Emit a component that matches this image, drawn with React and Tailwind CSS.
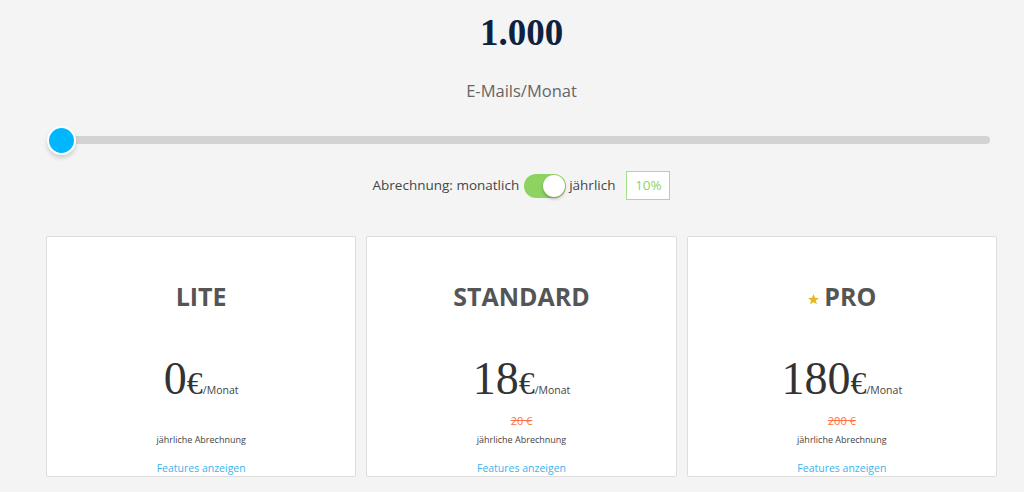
import React, { useState } from 'react';

const plans = [
  { name: 'LITE', price: '0', old: null, star: false },
  { name: 'STANDARD', price: '18', old: '20 €', star: false },
  { name: 'PRO', price: '180', old: '200 €', star: true },
];

function Star() {
  return (
    <svg width="13" height="13" viewBox="0 0 24 24" className="mr-[4px] mt-[4px]">
      <path d="M12 2l2.9 6.6 7.1.6-5.4 4.7 1.6 7-6.2-3.7-6.2 3.7 1.6-7L2 9.2l7.1-.6z" fill="#e8b923" />
    </svg>
  );
}

export default function App() {
  const [yearly, setYearly] = useState(true);

  return (
    <div className="min-h-screen bg-[#f4f4f4] font-['Open_Sans',sans-serif] overflow-hidden">
      <div className="ml-[46px] mr-[27px]">
        {/* Volume */}
        <div className="flex flex-col items-center pt-[11px]">
          <p className="font-['Liberation_Serif',serif] font-bold text-[37px] leading-[44px] text-[#0d2240]">1.000</p>
          <p className="mt-[25px] text-[16.5px] leading-[22px] text-[#666]">E-Mails/Monat</p>
        </div>

        {/* Slider */}
        <div className="ml-[1px] mr-[7px] mt-[23px] relative h-[30px] flex items-center">
          <div className="h-[8px] w-full rounded-full bg-[#d3d3d3]" />
          <div className="absolute left-0 top-[1px] w-[29px] h-[29px] rounded-full bg-[#00b6ff] border-2 border-white shadow-[0_3px_4px_rgba(0,0,0,0.15)]" />
        </div>

        {/* Billing */}
        <div className="mt-[16px] flex items-center justify-center text-[13.5px] text-[#444]">
          <span>Abrechnung: monatlich</span>
          <button
            onClick={() => setYearly(!yearly)}
            className="ml-[5px] mr-[3px] w-[42px] h-[24px] rounded-full bg-[#8ed35f] relative"
          >
            <span className="absolute right-[1px] top-[1px] w-[22px] h-[22px] rounded-full bg-white shadow-[0_2px_3px_rgba(0,0,0,0.25)]" />
          </button>
          <span>jährlich</span>
          <span className="ml-[11px] w-[44px] h-[29px] flex items-center justify-center border border-[#a4e08a] text-[#8ed35f] bg-white">10%</span>
        </div>

        {/* Plans */}
        <div className="mt-[36px] grid grid-cols-3 gap-[10px]">
          {plans.map((p) => (
            <div key={p.name} className="h-[241px] bg-white border border-[#ddd] rounded-[2px] flex flex-col items-center overflow-hidden">
              <div className="shrink-0 mt-[44px] h-[32px] flex items-center text-[25px] font-bold text-[#555]">
                {p.star && <Star />}
                <span>{p.name}</span>
              </div>
              <div className="shrink-0 mt-[41px] flex items-baseline font-['Liberation_Serif',serif] text-[#333]">
                <span className="text-[46px] leading-[50px]">{p.price}</span>
                <span className="text-[32px]">€</span>
                <span className="font-['Open_Sans',sans-serif] text-[10.5px] text-[#444]">/Monat</span>
              </div>
              <div className="shrink-0 mt-[7px] h-[14px] text-[11px] leading-[14px] text-[#ff7043] line-through">{p.old}</div>
              <div className="shrink-0 mt-[5px] h-[14px] text-[9px] leading-[14px] text-[#444]">jährliche Abrechnung</div>
              <a className="shrink-0 mt-[13px] h-[16px] text-[10.5px] leading-[16px] text-[#3bb4ee]">Features anzeigen</a>
            </div>
          ))}
        </div>
      </div>
    </div>
  );
}
